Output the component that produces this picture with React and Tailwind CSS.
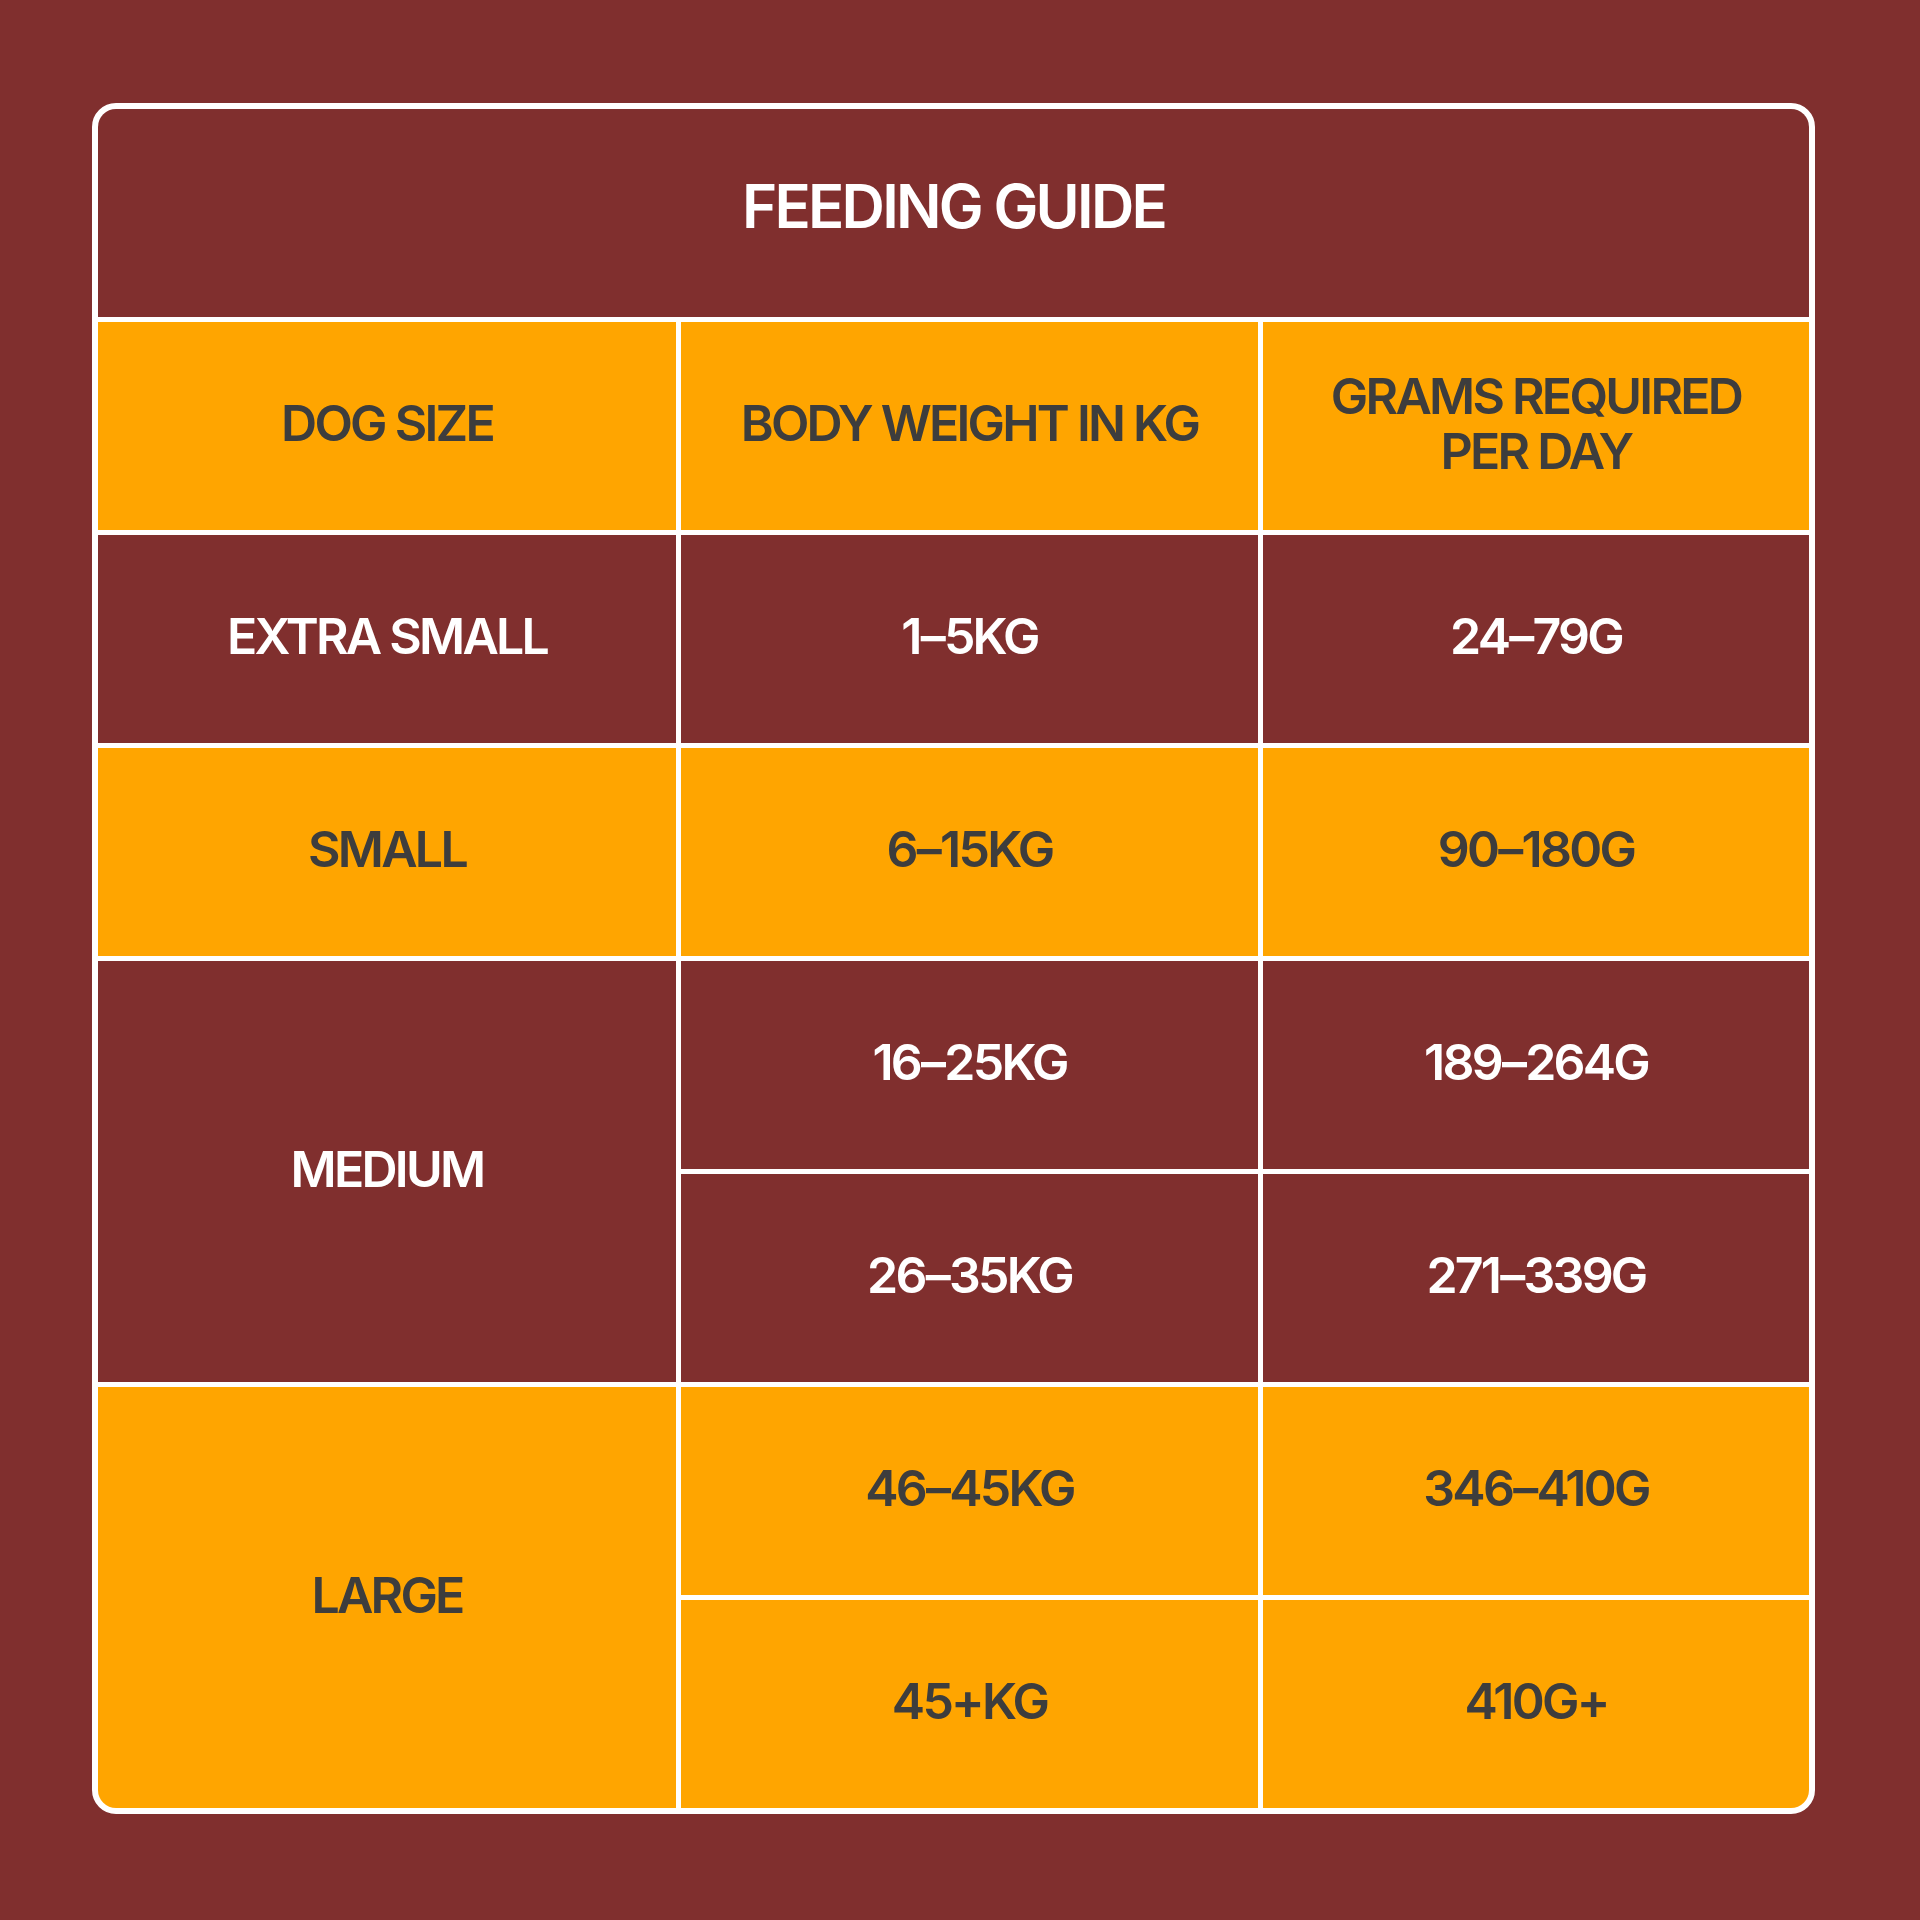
function R({ a, b }) {
  return (
    <span>
      {a}
      <span className="mx-[1px]">–</span>
      {b}
    </span>
  );
}

export default function App() {
  const maroon = "bg-[#802f2e] text-white";
  const orange = "bg-[#ffa500] text-[#3d3d3d]";
  const cell = "flex items-center justify-center text-center pb-[5px]";
  return (
    <div
      className="w-[1920px] h-[1920px] bg-[#802f2e] pl-[92px] pt-[103px]"
      style={{ fontFamily: "Inter, 'Noto Sans', sans-serif" }}
    >
      <div className="w-[1723px] h-[1711px] border-[6px] border-white rounded-[24px] overflow-hidden bg-white">
        <div className="grid h-full grid-cols-[578px_577px_1fr] grid-rows-8 gap-[5px] font-semibold tracking-[-0.055em] text-[50px] leading-[1.1]">
          <div className={`${cell} ${maroon} col-span-3 text-[60px] !pb-[14px]`}>FEEDING GUIDE</div>

          <div className={`${cell} ${orange}`}>DOG SIZE</div>
          <div className={`${cell} ${orange}`}>BODY WEIGHT IN KG</div>
          <div className={`${cell} ${orange}`}>
            GRAMS REQUIRED
            <br />
            PER DAY
          </div>

          <div className={`${cell} ${maroon}`}>EXTRA SMALL</div>
          <div className={`${cell} ${maroon}`}><R a="1" b="5KG" /></div>
          <div className={`${cell} ${maroon}`}><R a="24" b="79G" /></div>

          <div className={`${cell} ${orange}`}>SMALL</div>
          <div className={`${cell} ${orange}`}><R a="6" b="15KG" /></div>
          <div className={`${cell} ${orange}`}><R a="90" b="180G" /></div>

          <div className={`${cell} ${maroon} row-span-2`}>MEDIUM</div>
          <div className={`${cell} ${maroon}`}><R a="16" b="25KG" /></div>
          <div className={`${cell} ${maroon}`}><R a="189" b="264G" /></div>
          <div className={`${cell} ${maroon}`}><R a="26" b="35KG" /></div>
          <div className={`${cell} ${maroon}`}><R a="271" b="339G" /></div>

          <div className={`${cell} ${orange} row-span-2`}>LARGE</div>
          <div className={`${cell} ${orange}`}><R a="46" b="45KG" /></div>
          <div className={`${cell} ${orange}`}><R a="346" b="410G" /></div>
          <div className={`${cell} ${orange}`}>45+KG</div>
          <div className={`${cell} ${orange}`}>410G+</div>
        </div>
      </div>
    </div>
  );
}
